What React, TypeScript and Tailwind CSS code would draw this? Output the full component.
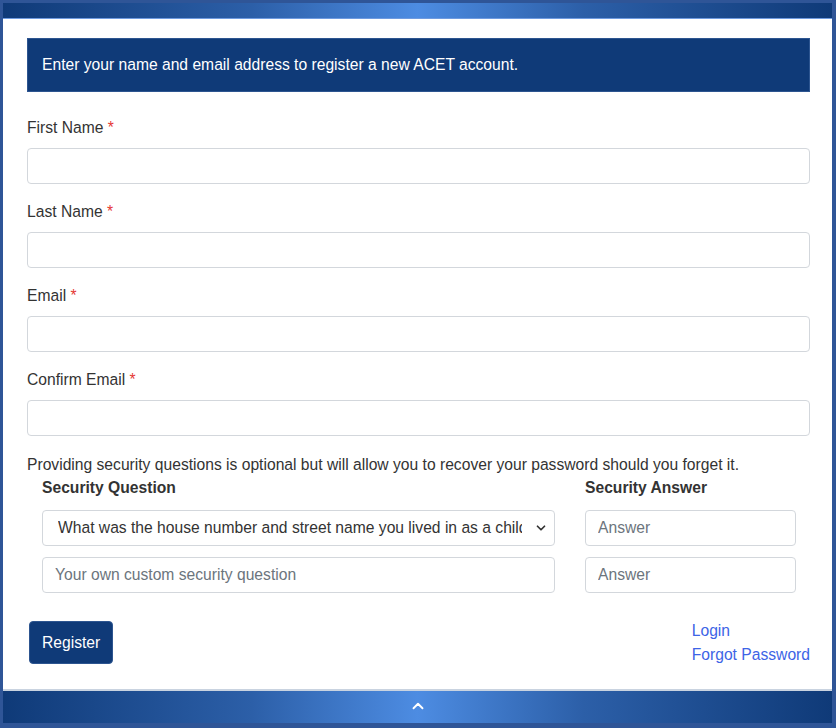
import { ChevronDown, ChevronUp } from 'lucide-react'

const fields = ['First Name', 'Last Name', 'Email', 'Confirm Email']

const barGradient =
  'bg-[linear-gradient(90deg,#0f3a78_0%,#2c5fa8_30%,#4d8ce2_50%,#2c5fa8_70%,#0f3a78_100%)]'

export default function App() {
  return (
    <div className="w-[836px] h-[728px] bg-[#2f5597] pt-[3px] pl-[3px] pr-[4px] pb-[5px] font-['Liberation_Sans',Arial,sans-serif] text-[15.65px] text-[#333]">
      <div className="flex flex-col h-full bg-white">
        {/* top bar */}
        <div className={`h-[16px] shrink-0 border-b border-[#6f9be0] ${barGradient}`} />

        <div className="flex-1 pt-[19px] pl-[24px] pr-[22px]">
          {/* Intro */}
          <div className="h-[54px] flex items-center px-[14px] bg-[#0f3a78] text-white border border-[#2d5590]">
            Enter your name and email address to register a new ACET account.
          </div>

          <div className="pt-[24px]">
            {fields.map((label) => (
              <div key={label} className="mb-[16px]">
                <label className="block leading-6">
                  {label} <span className="text-[#e53935]">*</span>
                </label>
                <input
                  type="text"
                  className="mt-[8px] block w-full h-[36px] rounded-[4px] border border-[#d3d7dc] bg-white px-3 outline-none"
                />
              </div>
            ))}
          </div>

          <p className="leading-6 mt-[17px]">
            Providing security questions is optional but will allow you to recover your password should you forget it.
          </p>

          {/* Security questions */}
          <div className="flex pl-[15px] mt-[-1px]">
            <div className="w-[513px]">
              <div className="font-bold leading-6">Security Question</div>
              <div className="relative mt-[10px]">
                <select className="block w-full h-[36px] appearance-none rounded-[4px] border border-[#d3d7dc] bg-white pl-[15px] pr-8 text-[#333] outline-none overflow-hidden">
                  <option>What was the house number and street name you lived in as a child?</option>
                </select>
                <ChevronDown
                  size={14}
                  strokeWidth={3}
                  className="absolute right-[7px] top-[11px] text-[#333] bg-white"
                />
              </div>
              <input
                type="text"
                placeholder="Your own custom security question"
                className="mt-[11px] block w-full h-[36px] rounded-[4px] border border-[#d3d7dc] bg-white px-3 outline-none placeholder:text-[#6c757d]"
              />
            </div>
            <div className="w-[211px] ml-[30px]">
              <div className="font-bold leading-6">Security Answer</div>
              <input
                type="text"
                placeholder="Answer"
                className="mt-[10px] block w-full h-[36px] rounded-[4px] border border-[#d3d7dc] bg-white px-3 outline-none placeholder:text-[#6c757d]"
              />
              <input
                type="text"
                placeholder="Answer"
                className="mt-[11px] block w-full h-[36px] rounded-[4px] border border-[#d3d7dc] bg-white px-3 outline-none placeholder:text-[#6c757d]"
              />
            </div>
          </div>

          {/* Actions */}
          <div className="flex justify-between mt-[28px]">
            <button className="ml-[2px] h-[43px] px-[12px] rounded-[4px] bg-[#0f3a78] border border-[#2d5590] text-white">
              Register
            </button>
            <div className="flex flex-col items-start leading-6 text-[#3d64e6] -mt-[2px]">
              <a href="#">Login</a>
              <a href="#">Forgot Password</a>
            </div>
          </div>
        </div>

        {/* bottom bar */}
        <div className={`h-[34px] shrink-0 flex items-center justify-center pb-[2px] border-t-2 border-[#c9d3e0] ${barGradient}`}>
          <ChevronUp size={18} strokeWidth={2.5} className="text-white" />
        </div>
      </div>
    </div>
  )
}
